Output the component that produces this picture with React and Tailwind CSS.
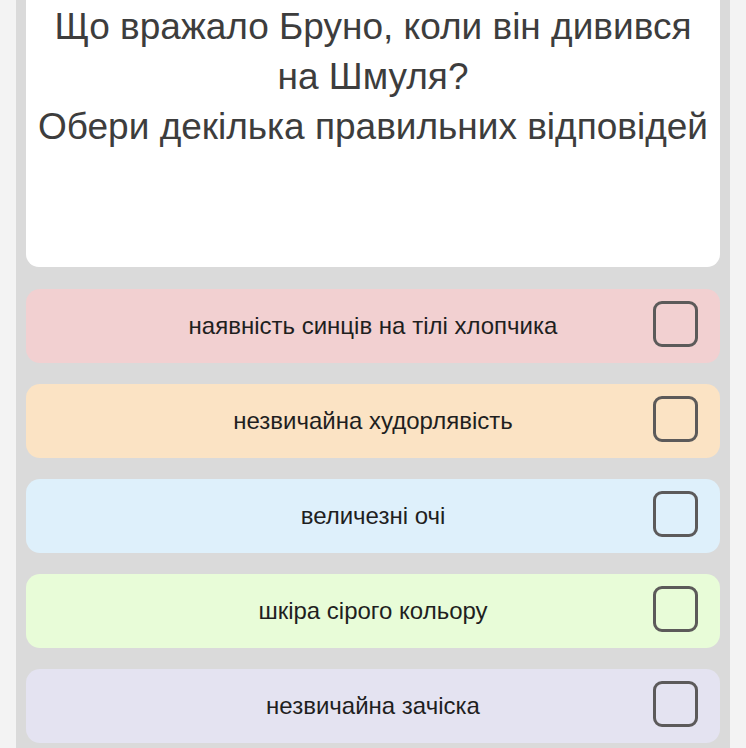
const options = [
  { text: "наявність синців на тілі хлопчика", bg: "bg-[#f2d0d1]" },
  { text: "незвичайна худорлявість", bg: "bg-[#fbe3c4]" },
  { text: "величезні очі", bg: "bg-[#def0fb]" },
  { text: "шкіра сірого кольору", bg: "bg-[#e8fcd8]" },
  { text: "незвичайна зачіска", bg: "bg-[#e4e3f1]" },
];

const Option = ({ text, bg }) => (
  <div className={`relative flex items-center justify-center h-[74px] rounded-[14px] ${bg}`}>
    <span className="text-[24px] text-[#1f1f1f]">{text}</span>
    <div className="absolute right-[22px] top-[12px] w-[45px] h-[46px] rounded-[9px] border-[3px] border-[#5c5a5a]" />
  </div>
);

export default function App() {
  return (
    <div className="min-h-screen bg-[#f3f3f3] font-['Liberation_Sans',Arial,sans-serif]">
      <div className="mx-[16px] w-[714px] h-[748px] overflow-hidden bg-[#dadada] px-[10px]">
        <div className="h-[267px] bg-white rounded-b-[13px] pt-[2px] text-center text-[37px] leading-[50px] text-[#3d3d3d]">
          <p>Що вражало Бруно, коли він дивився</p>
          <p>на Шмуля?</p>
          <p>Обери декілька правильних відповідей</p>
        </div>
        <div className="flex flex-col gap-[21px] pt-[22px]">
          {options.map((o) => (
            <Option key={o.text} {...o} />
          ))}
        </div>
      </div>
    </div>
  );
}
